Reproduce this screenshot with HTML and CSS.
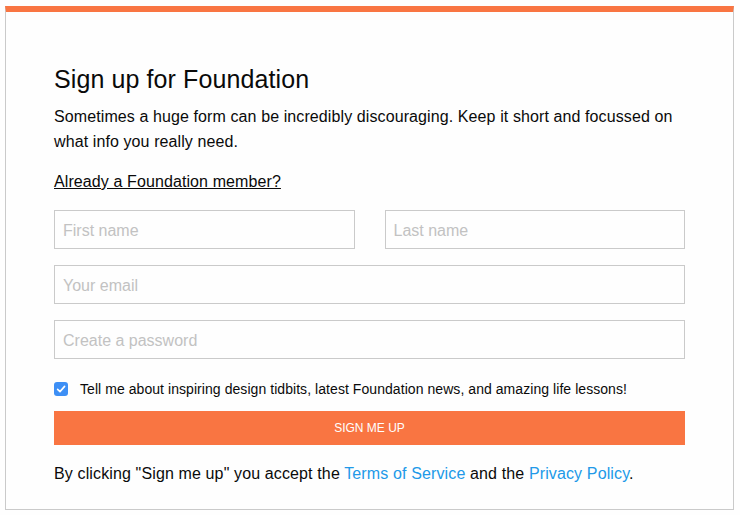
FILE: index.html
```html
<!DOCTYPE html>
<html lang="en">
<head>
<meta charset="utf-8">
<title>Sign up for Foundation</title>
<link rel="stylesheet" href="styles.css">
</head>
<body>
<form class="card">
  <h1 class="title">Sign up for Foundation</h1>
  <p class="lead">Sometimes a huge form can be incredibly discouraging. Keep it short and focussed on what info you really need.</p>
  <a class="member-link" href="#">Already a Foundation member?</a>
  <div class="name-row">
    <input class="field" type="text" placeholder="First name">
    <input class="field" type="text" placeholder="Last name">
  </div>
  <input class="field" type="email" placeholder="Your email">
  <input class="field" type="password" placeholder="Create a password">
  <label class="check-row">
    <span class="check-box">
      <svg viewBox="0 0 14 14" width="14" height="14"><path d="M3.6 7.3 L6 9.6 L10.6 4.4" fill="none" stroke="#fff" stroke-width="1.6" stroke-linecap="round" stroke-linejoin="round"/></svg>
    </span>
    <span class="check-label">Tell me about inspiring design tidbits, latest Foundation news, and amazing life lessons!</span>
  </label>
  <button class="submit" type="button">SIGN ME UP</button>
  <p class="terms">By clicking "Sign me up" you accept the <a href="#" class="blue">Terms of Service</a> and the <a href="#" class="blue">Privacy Policy</a>.</p>
</form>
</body>
</html>
```
FILE: styles.css
```css
html, body {
  margin: 0;
  padding: 0;
  background: #fefefe;
}
body {
  font-family: "Liberation Sans", Arial, Helvetica, sans-serif;
  color: #0a0a0a;
}
.card {
  margin: 6px 6px 0 5px;
  height: 504px;
  box-sizing: border-box;
  border: 1px solid #cacaca;
  border-top: 6px solid #f97542;
  padding: 53px 48px 0 48px;
  display: flex;
  flex-direction: column;
  background: #fefefe;
}
.title {
  margin: 0;
  font-size: 25px;
  font-weight: normal;
  line-height: 28.8px;
  letter-spacing: 0.1px;
}
.lead {
  margin: 10px 0 0 0;
  font-size: 16px;
  line-height: 25px;
  letter-spacing: 0.1px;
}
.member-link {
  margin-top: 15px;
  font-size: 16px;
  line-height: 25px;
  color: #0a0a0a;
  text-decoration: underline;
  align-self: flex-start;
  letter-spacing: 0.1px;
}
.name-row {
  margin-top: 16px;
  display: grid;
  grid-template-columns: 1fr 1fr;
  column-gap: 30px;
}
.field {
  display: block;
  box-sizing: border-box;
  width: 100%;
  height: 39px;
  margin: 0;
  padding: 3px 8px 0 8px;
  border: 1px solid #cacaca;
  background: #fefefe;
  font-family: "Liberation Sans", Arial, Helvetica, sans-serif;
  font-size: 16px;
  color: #0a0a0a;
  outline: none;
  border-radius: 0;
}
.field::placeholder {
  color: #c2c2c2;
}
.card > .field {
  margin-top: 16px;
}
.check-row {
  margin-top: 20px;
  display: flex;
  align-items: center;
  height: 20px;
}
.check-box {
  width: 14px;
  height: 14px;
  border-radius: 3px;
  background: #3d8ff5;
  display: flex;
  flex: none;
}
.check-label {
  margin-left: 12px;
  font-size: 14px;
  line-height: 20px;
  letter-spacing: 0.06px;
}
.submit {
  margin-top: 12px;
  height: 34px;
  border: none;
  background: #f97542;
  color: #fefefe;
  font-family: "Liberation Sans", Arial, Helvetica, sans-serif;
  font-size: 12px;
  padding: 0;
  border-radius: 0;
}
.terms {
  margin: 16px 0 0 0;
  font-size: 16px;
  line-height: 25px;
  letter-spacing: 0.13px;
}
.blue {
  color: #2199e8;
  text-decoration: none;
}
```
